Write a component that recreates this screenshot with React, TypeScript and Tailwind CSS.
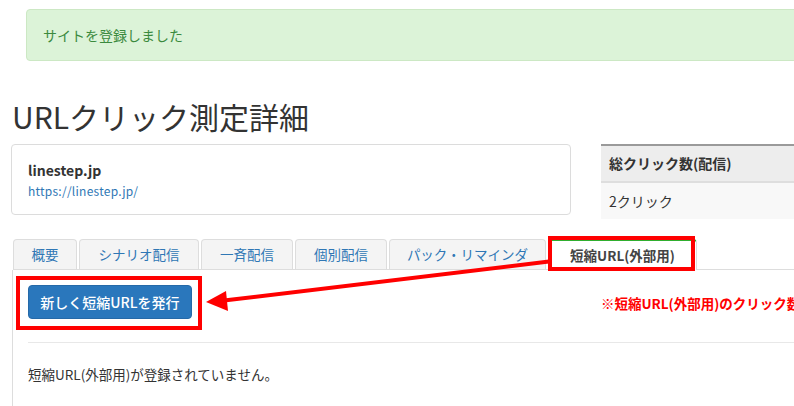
import React from 'react'

const tabs = [
  { label: '概要', w: 'w-[64px]' },
  { label: 'シナリオ配信', w: 'w-[120px]' },
  { label: '一斉配信', w: 'w-[92px]' },
  { label: '個別配信', w: 'w-[92px]' },
  { label: 'パック・リマインダ', w: 'w-[157px]' },
]

function Arrow() {
  return (
    <svg
      className="absolute left-0 top-0 pointer-events-none"
      width="794"
      height="406"
      viewBox="0 0 794 406"
    >
      <line x1="224" y1="300.5" x2="549" y2="261.5" stroke="#ff0000" strokeWidth="4" />
      <polygon points="206,302 226,291 228,311" fill="#ff0000" />
    </svg>
  )
}

export default function App() {
  return (
    <div className="relative w-[794px] h-[406px] overflow-hidden bg-white text-[#333] font-['Noto_Sans_CJK_JP','Noto_Sans',sans-serif]">
      <div className="w-[1100px]">
        <div className="mt-[9px] ml-[26px] h-[52px] flex items-center pl-[16px] bg-[#dcf3d8] border border-[#cce8c4] rounded-[4px] text-[14px] text-[#3b8a3e]">
          サイトを登録しました
        </div>

        <h1 className="mt-[32px] ml-[12px] h-[46px] leading-[46px] text-[30px] font-normal text-[#333]">
          URLクリック測定詳細
        </h1>

        <div className="mt-[5px] flex items-start">
          <div className="ml-[11px] w-[560px] h-[71px] border border-[#dcdcdc] rounded-[4px] px-[16px] pt-[15px]">
            <div className="text-[14px] font-bold leading-[20px] text-[#333]">linestep.jp</div>
            <div className="mt-[2px] text-[12px] leading-[18px] tracking-[0.25px] text-[#2f77b5]">https://linestep.jp/</div>
          </div>
          <div className="ml-[30px] w-[400px] border-t-2 border-[#9a9a9a]">
            <div className="h-[37px] flex items-center px-[8px] bg-[#ededed] border-b-2 border-[#dedede] text-[14px] font-bold">
              総クリック数(配信)
            </div>
            <div className="h-[36px] flex items-center px-[8px] bg-[#f8f8f8] text-[14px]">
              2クリック
            </div>
          </div>
        </div>

        <div className="mt-[20px] ml-[13px] flex items-end gap-[2px] border-b border-[#dddddd]">
          {tabs.map((t) => (
            <div
              key={t.label}
              className={`${t.w} h-[30px] flex items-center justify-center bg-[#f4f4f4] border border-b-0 border-[#dddddd] rounded-t-[4px] text-[13.5px] text-[#2f77b5]`}
            >
              {t.label}
            </div>
          ))}
          <div className="relative w-[149px] h-[31px] -mb-px flex items-center justify-center bg-white border border-b-0 border-[#dddddd] border-t-2 border-t-[#2fae2f] rounded-t-[4px] text-[13.5px] font-bold text-[#444]">
            短縮URL(外部用)
            <div className="absolute -top-[5px] -left-px right-px -bottom-px border-4 border-[#ff0000]" />
          </div>
        </div>

        <div className="ml-[12px] border-l border-[#dddddd] pb-[40px]">
          <div className="pt-[6px] pl-[3px] flex items-center">
            <div className="border-4 border-[#ff0000] pl-[8px] pr-[6px] pt-[5px] pb-[7px]">
              <button className="w-[164px] h-[34px] rounded-[4px] bg-[#2a77bc] border border-[#2569a8] text-white text-[14px] font-medium">
                新しく短縮URLを発行
              </button>
            </div>
            <div className="ml-[399px] whitespace-nowrap text-[13.5px] font-bold text-[#ff0000]">
              ※短縮URL(外部用)のクリック数は配信のクリック数に含まれません
            </div>
          </div>
          <div className="mt-[12px] ml-[15px] border-t border-[#e8e8e8]" />
          <div className="mt-[21px] ml-[15px] text-[13.5px] leading-[20px] text-[#333]">
            短縮URL(外部用)が登録されていません。
          </div>
        </div>
      </div>
      <Arrow />
    </div>
  )
}
